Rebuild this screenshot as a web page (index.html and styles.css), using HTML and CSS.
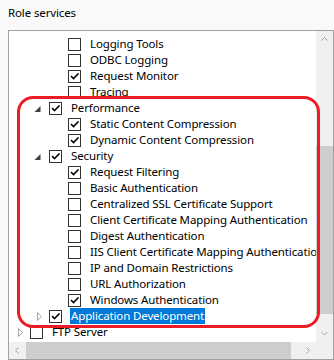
FILE: index.html
```html
<!DOCTYPE html>
<html>
<head>
<meta charset="utf-8">
<link rel="stylesheet" href="styles.css">
</head>
<body>
<div class="title">Role services</div>
<div class="box">
  <div class="viewport">
    <ul class="tree">
      <li class="row l2"><span class="cb"></span><span class="label">Logging Tools</span></li>
      <li class="row l2"><span class="cb"></span><span class="label">ODBC Logging</span></li>
      <li class="row l2"><span class="cb"><svg class="tick" viewBox="0 0 11 11"><path d="M2 5 L4.5 7.5 L9.5 2.5"/></svg></span><span class="label">Request Monitor</span></li>
      <li class="row l2"><span class="cb"></span><span class="label">Tracing</span></li>
      <li class="row l1"><span class="exp"><svg viewBox="0 0 16 16"><polygon class="tri-open" points="7.5,6 7.5,12 1.5,12"/></svg></span><span class="cb"><svg class="tick" viewBox="0 0 11 11"><path d="M2 5 L4.5 7.5 L9.5 2.5"/></svg></span><span class="label">Performance</span></li>
      <li class="row l2"><span class="cb"><svg class="tick" viewBox="0 0 11 11"><path d="M2 5 L4.5 7.5 L9.5 2.5"/></svg></span><span class="label">Static Content Compression</span></li>
      <li class="row l2"><span class="cb"><svg class="tick" viewBox="0 0 11 11"><path d="M2 5 L4.5 7.5 L9.5 2.5"/></svg></span><span class="label">Dynamic Content Compression</span></li>
      <li class="row l1"><span class="exp"><svg viewBox="0 0 16 16"><polygon class="tri-open" points="7.5,6 7.5,12 1.5,12"/></svg></span><span class="cb"><svg class="tick" viewBox="0 0 11 11"><path d="M2 5 L4.5 7.5 L9.5 2.5"/></svg></span><span class="label">Security</span></li>
      <li class="row l2"><span class="cb"><svg class="tick" viewBox="0 0 11 11"><path d="M2 5 L4.5 7.5 L9.5 2.5"/></svg></span><span class="label">Request Filtering</span></li>
      <li class="row l2"><span class="cb"></span><span class="label">Basic Authentication</span></li>
      <li class="row l2"><span class="cb"></span><span class="label">Centralized SSL Certificate Support</span></li>
      <li class="row l2"><span class="cb"></span><span class="label">Client Certificate Mapping Authentication</span></li>
      <li class="row l2"><span class="cb"></span><span class="label">Digest Authentication</span></li>
      <li class="row l2"><span class="cb"></span><span class="label">IIS Client Certificate Mapping Authentication</span></li>
      <li class="row l2"><span class="cb"></span><span class="label">IP and Domain Restrictions</span></li>
      <li class="row l2"><span class="cb"></span><span class="label">URL Authorization</span></li>
      <li class="row l2"><span class="cb"><svg class="tick" viewBox="0 0 11 11"><path d="M2 5 L4.5 7.5 L9.5 2.5"/></svg></span><span class="label">Windows Authentication</span></li>
      <li class="row l1"><span class="exp"><svg viewBox="0 0 16 16"><polygon class="tri-closed" points="4.5,4.5 8.5,8.5 4.5,12.5"/></svg></span><span class="cb"><svg class="tick" viewBox="0 0 11 11"><path d="M2 5 L4.5 7.5 L9.5 2.5"/></svg></span><span class="label sel">Application Development</span></li>
      <li class="row l0"><span class="exp"><svg viewBox="0 0 16 16"><polygon class="tri-closed" points="4.5,4.5 8.5,8.5 4.5,12.5"/></svg></span><span class="cb"></span><span class="label">FTP Server</span></li>
    </ul>
  </div>
  <div class="vscroll">
    <div class="btn"><svg viewBox="0 0 17 17"><path class="arrow" d="M5.5 9.5 L8.5 6.5 L11.5 9.5"/></svg></div>
    <div class="vtrack"><div class="vthumb"></div></div>
    <div class="btn"><svg viewBox="0 0 17 17"><path class="arrow" d="M5.5 7 L8.5 10 L11.5 7"/></svg></div>
  </div>
  <div class="hscroll">
    <div class="btn"><svg viewBox="0 0 17 17"><path class="arrow" d="M9.5 5.5 L6.5 8.5 L9.5 11.5"/></svg></div>
    <div class="htrack"><div class="hthumb"></div></div>
    <div class="btn"><svg viewBox="0 0 17 17"><path class="arrow" d="M7.5 5.5 L10.5 8.5 L7.5 11.5"/></svg></div>
  </div>
  <div class="corner"></div>
</div>
<div class="annotation"></div>
</body>
</html>
```

FILE: styles.css
```css
html, body {
  margin: 0;
  padding: 0;
}
body {
  width: 334px;
  height: 360px;
  overflow: hidden;
  position: relative;
  background: #f9f9f9;
  font-family: "Noto Sans", "Segoe UI", sans-serif;
  font-size: 11.5px;
  letter-spacing: -0.13px;
  color: #000;
}
.title {
  box-sizing: border-box;
  height: 21px;
  padding: 5px 0 0 8px;
  line-height: 16px;
  margin-bottom: 9px;
}
.box {
  margin-left: 8px;
  width: 326px;
  box-sizing: border-box;
  border: 1px solid #a0a0a0;
  background: #fff;
  display: grid;
  grid-template-columns: 307px 17px;
  grid-template-rows: 311px 17px;
}
.viewport {
  overflow: hidden;
  padding-top: 5px;
}
.tree {
  list-style: none;
  margin: 0;
  padding: 0;
}
.row {
  display: flex;
  align-items: center;
  height: 16px;
  white-space: nowrap;
}
.row.l2 { padding-left: 59px; }
.row.l1 { padding-left: 24px; }
.row.l0 { padding-left: 5px; }
.exp {
  width: 16px;
  height: 16px;
  flex: none;
}
.exp svg {
  display: block;
  width: 16px;
  height: 16px;
}
.tri-open {
  fill: #404040;
}
.tri-closed {
  fill: none;
  stroke: #a6a6a6;
  stroke-width: 1;
}
.cb {
  width: 13px;
  height: 13px;
  box-sizing: border-box;
  border: 1px solid #333;
  background: #fff;
  flex: none;
}
.tick {
  display: block;
  width: 11px;
  height: 11px;
}
.tick path {
  fill: none;
  stroke: #000;
  stroke-width: 1.6;
}
.label {
  margin-left: 8px;
  padding: 0 1px;
  line-height: 16px;
}
.label.sel {
  background: #0078d7;
  color: #fff;
}
.vscroll {
  background: #f0f0f0;
  display: flex;
  flex-direction: column;
}
.btn {
  width: 17px;
  height: 17px;
  flex: none;
}
.btn svg {
  display: block;
  width: 17px;
  height: 17px;
}
.arrow {
  fill: none;
  stroke: #a3a3a3;
  stroke-width: 1;
}
.vtrack {
  flex: 1;
  padding-top: 98px;
}
.vthumb {
  height: 168px;
  background: #cdcdcd;
}
.hscroll {
  background: #f0f0f0;
  display: flex;
}
.htrack {
  flex: 1;
}
.hthumb {
  width: 265px;
  height: 17px;
  background: #cdcdcd;
}
.corner {
  background: #f0f0f0;
}
.annotation {
  position: absolute;
  left: 17px;
  top: 96px;
  width: 303px;
  height: 232px;
  box-sizing: border-box;
  border: 3px solid #ed1c24;
  border-radius: 16px;
  pointer-events: none;
}
```
